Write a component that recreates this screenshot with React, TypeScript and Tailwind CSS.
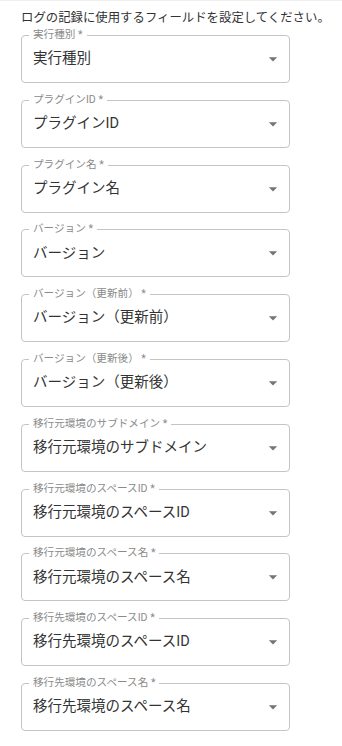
import React from 'react';

const fields = [
  '実行種別',
  'プラグインID',
  'プラグイン名',
  'バージョン',
  'バージョン（更新前）',
  'バージョン（更新後）',
  '移行元環境のサブドメイン',
  '移行元環境のスペースID',
  '移行元環境のスペース名',
  '移行先環境のスペースID',
  '移行先環境のスペース名',
];

function ArrowDrop() {
  return (
    <svg viewBox="0 0 24 24" className="w-[20px] h-[20px] fill-[#757575]">
      <path d="M7 10l5 5 5-5z" />
    </svg>
  );
}

function SelectField({ label }: { label: string }) {
  return (
    <div className="relative h-[48px] w-[269px] rounded-[4px] border border-[#c4c4c4] flex items-center justify-between pl-[11px] pr-[6px]">
      <span className="absolute -top-[7px] left-[7px] bg-white px-[4px] text-[10.6px] leading-[12px] text-[#8a8a8a]">
        {label} *
      </span>
      <span className="text-[14.5px] text-[#333333]">{label}</span>
      <ArrowDrop />
    </div>
  );
}

function App() {
  return (
    <div
      className="min-h-[746px] bg-white border-t border-[#eeeeee] pl-[21px] pt-[8px]"
      style={{ fontFamily: 'Roboto, "Noto Sans CJK JP", sans-serif' }}
    >
      <p className="text-[12.4px] leading-[18px] text-[#333333] whitespace-nowrap">
        ログの記録に使用するフィールドを設定してください。
      </p>
      <div className="mt-[8px] flex flex-col gap-[16.8px]">
        {fields.map((f) => (
          <SelectField key={f} label={f} />
        ))}
      </div>
    </div>
  );
}

export default App;
